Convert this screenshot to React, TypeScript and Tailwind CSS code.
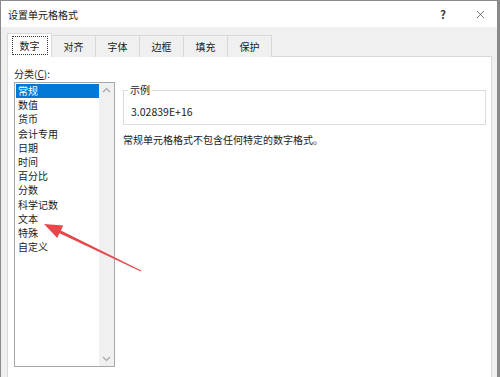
import { X } from 'lucide-react'

const tabs = ['数字', '对齐', '字体', '边框', '填充', '保护']

const categories = [
  '常规',
  '数值',
  '货币',
  '会计专用',
  '日期',
  '时间',
  '百分比',
  '分数',
  '科学记数',
  '文本',
  '特殊',
  '自定义',
]

export default function App() {
  return (
    <div
      className="relative w-[500px] h-[377px] overflow-hidden bg-[#f0f0f0] border-t border-l border-r-[3px] border-[#8a8a8a] text-[10px] text-[#1a1a1a]"
      style={{ fontFamily: '"Noto Sans CJK SC", "Noto Sans", sans-serif' }}
    >
      {/* Title bar */}
      <div className="h-[26px] bg-white flex items-center pl-[7px] pr-[10px]">
        <span className="text-[10px]">设置单元格格式</span>
        <span className="ml-auto mr-[28px] text-[11px] font-bold text-[#333]">?</span>
        <X className="w-[13px] h-[13px] text-[#333]" strokeWidth={1.2} />
      </div>

      {/* Tabs */}
      <div className="flex items-end pl-[6px] mt-[6px] h-[24px]">
        {tabs.map((t, i) =>
          i === 0 ? (
            <div
              key={t}
              className="relative z-10 w-[45px] h-[24px] bg-white border border-b-0 border-[#d9d9d9] flex items-center justify-center"
            >
              <div className="border border-dotted border-[#333] px-[7px] h-[19px] flex items-center">{t}</div>
            </div>
          ) : (
            <div
              key={t}
              className="w-[45px] h-[22px] -ml-px bg-[#f0f0f0] border border-b-0 border-[#d9d9d9] flex items-center justify-center"
            >
              {t}
            </div>
          )
        )}
      </div>

      {/* Panel */}
      <div className="-mt-px ml-[6px] mr-[5px] h-[340px] bg-white border border-[#d9d9d9] flex gap-[8px] pl-[6px] pt-[9px]">
        {/* Left: category list */}
        <div className="flex flex-col w-[101px]">
          <div className="h-[15px] leading-[15px]">
            分类(<span className="underline">C</span>):
          </div>
          <div className="mt-[1px] h-[285px] border border-[#a8a8a8] flex">
            <div className="flex-1 pt-[1px] pl-[1px]">
              {categories.map((c, i) => (
                <div
                  key={c}
                  className={
                    i === 0
                      ? 'h-[14.2px] leading-[14.2px] pl-[2px] bg-[#0078d7] text-white'
                      : 'h-[14.2px] leading-[14.2px] pl-[2px]'
                  }
                >
                  {c}
                </div>
              ))}
            </div>
            <div className="w-[15px] bg-[#f0f0f0] flex flex-col justify-between items-center py-[4px]">
              <svg width="9" height="6" viewBox="0 0 9 6">
                <path d="M1 5 L4.5 1.5 L8 5" fill="none" stroke="#a6a6a6" strokeWidth="1.2" />
              </svg>
              <svg width="9" height="6" viewBox="0 0 9 6">
                <path d="M1 1 L4.5 4.5 L8 1" fill="none" stroke="#a6a6a6" strokeWidth="1.2" />
              </svg>
            </div>
          </div>
        </div>

        {/* Right: sample and description */}
        <div className="flex-1 pr-[5px]">
          <div className="relative mt-[24px] h-[35px] border border-[#dcdcdc] flex items-center pl-[7px] pt-[8px]">
            <span className="absolute -top-[8px] left-[4px] bg-white px-[2px] leading-[14px]">示例</span>
            <span className="text-[10.5px]">3.02839E+16</span>
          </div>
          <div className="mt-[7px]">常规单元格格式不包含任何特定的数字格式。</div>
        </div>
      </div>

      {/* Red arrow annotation */}
      <svg className="absolute left-0 top-0 pointer-events-none" width="500" height="377">
        <polygon
          points="43,223 62.2,224.5 59.9,229.5 140.2,269.6 139.8,270.4 58.5,232.2 56.2,237.1"
          fill="#e8474a"
        />
      </svg>
    </div>
  )
}
